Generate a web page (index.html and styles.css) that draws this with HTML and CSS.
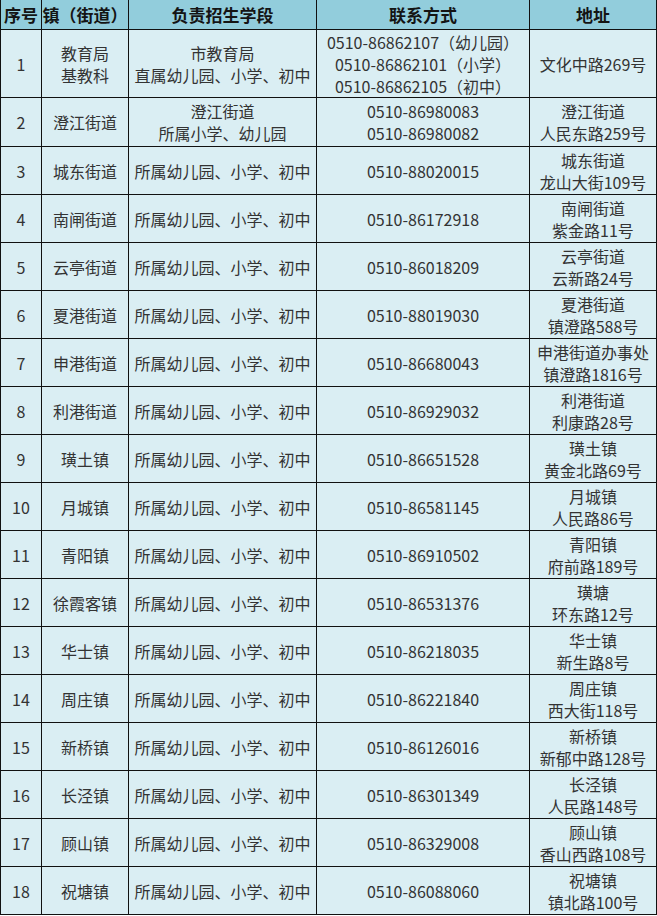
FILE: index.html
```html
<!DOCTYPE html>
<html lang="zh">
<head>
<meta charset="utf-8">
<link rel="stylesheet" href="styles.css">
</head>
<body>
<table class="tbl">
  <colgroup>
    <col class="c1"><col class="c2"><col class="c3"><col class="c4"><col class="c5">
  </colgroup>
  <thead>
    <tr class="head"><th>序号</th><th>镇（街道）</th><th>负责招生学段</th><th>联系方式</th><th>地址</th></tr>
  </thead>
  <tbody>
    <tr class="r1"><td>1</td><td>教育局<br>基教科</td><td>市教育局<br>直属幼儿园、小学、初中</td><td>0510-86862107（幼儿园）<br>0510-86862101（小学）<br>0510-86862105（初中）</td><td>文化中路269号</td></tr>
    <tr class="r2"><td>2</td><td>澄江街道</td><td>澄江街道<br>所属小学、幼儿园</td><td>0510-86980083<br>0510-86980082</td><td>澄江街道<br>人民东路259号</td></tr>
    <tr><td>3</td><td>城东街道</td><td>所属幼儿园、小学、初中</td><td>0510-88020015</td><td>城东街道<br>龙山大街109号</td></tr>
    <tr><td>4</td><td>南闸街道</td><td>所属幼儿园、小学、初中</td><td>0510-86172918</td><td>南闸街道<br>紫金路11号</td></tr>
    <tr><td>5</td><td>云亭街道</td><td>所属幼儿园、小学、初中</td><td>0510-86018209</td><td>云亭街道<br>云新路24号</td></tr>
    <tr><td>6</td><td>夏港街道</td><td>所属幼儿园、小学、初中</td><td>0510-88019030</td><td>夏港街道<br>镇澄路588号</td></tr>
    <tr><td>7</td><td>申港街道</td><td>所属幼儿园、小学、初中</td><td>0510-86680043</td><td>申港街道办事处<br>镇澄路1816号</td></tr>
    <tr><td>8</td><td>利港街道</td><td>所属幼儿园、小学、初中</td><td>0510-86929032</td><td>利港街道<br>利康路28号</td></tr>
    <tr><td>9</td><td>璜土镇</td><td>所属幼儿园、小学、初中</td><td>0510-86651528</td><td>璜土镇<br>黄金北路69号</td></tr>
    <tr><td>10</td><td>月城镇</td><td>所属幼儿园、小学、初中</td><td>0510-86581145</td><td>月城镇<br>人民路86号</td></tr>
    <tr><td>11</td><td>青阳镇</td><td>所属幼儿园、小学、初中</td><td>0510-86910502</td><td>青阳镇<br>府前路189号</td></tr>
    <tr><td>12</td><td>徐霞客镇</td><td>所属幼儿园、小学、初中</td><td>0510-86531376</td><td>璜塘<br>环东路12号</td></tr>
    <tr><td>13</td><td>华士镇</td><td>所属幼儿园、小学、初中</td><td>0510-86218035</td><td>华士镇<br>新生路8号</td></tr>
    <tr><td>14</td><td>周庄镇</td><td>所属幼儿园、小学、初中</td><td>0510-86221840</td><td>周庄镇<br>西大街118号</td></tr>
    <tr><td>15</td><td>新桥镇</td><td>所属幼儿园、小学、初中</td><td>0510-86126016</td><td>新桥镇<br>新郁中路128号</td></tr>
    <tr><td>16</td><td>长泾镇</td><td>所属幼儿园、小学、初中</td><td>0510-86301349</td><td>长泾镇<br>人民路148号</td></tr>
    <tr><td>17</td><td>顾山镇</td><td>所属幼儿园、小学、初中</td><td>0510-86329008</td><td>顾山镇<br>香山西路108号</td></tr>
    <tr><td>18</td><td>祝塘镇</td><td>所属幼儿园、小学、初中</td><td>0510-86088060</td><td>祝塘镇<br>镇北路100号</td></tr>
  </tbody>
</table>
</body>
</html>
```
FILE: styles.css
```css
html, body {
  margin: 0;
  padding: 0;
  background: #ffffff;
}
.tbl {
  border-collapse: collapse;
  table-layout: fixed;
  width: 656px;
  font-family: "Noto Sans CJK SC", "Noto Sans", sans-serif;
  font-size: 16px;
  line-height: 22px;
}
.c1 { width: 41px; }
.c2 { width: 87px; }
.c3 { width: 188px; }
.c4 { width: 213px; }
.c5 { width: 127px; }
.tbl th, .tbl td {
  border: 1px solid #111111;
  padding: 0;
  text-align: center;
  vertical-align: middle;
  white-space: nowrap;
}
.tbl th {
  background: #92cddc;
  color: #141414;
  font-weight: 700;
  font-size: 17px;
  height: 29px;
  border-top: none;
}
.tbl td {
  background: #daeef3;
  color: #333333;
  height: 47px;
}
.tbl .r1 td { height: 67px; }
.tbl .r2 td { height: 48px; }
```
